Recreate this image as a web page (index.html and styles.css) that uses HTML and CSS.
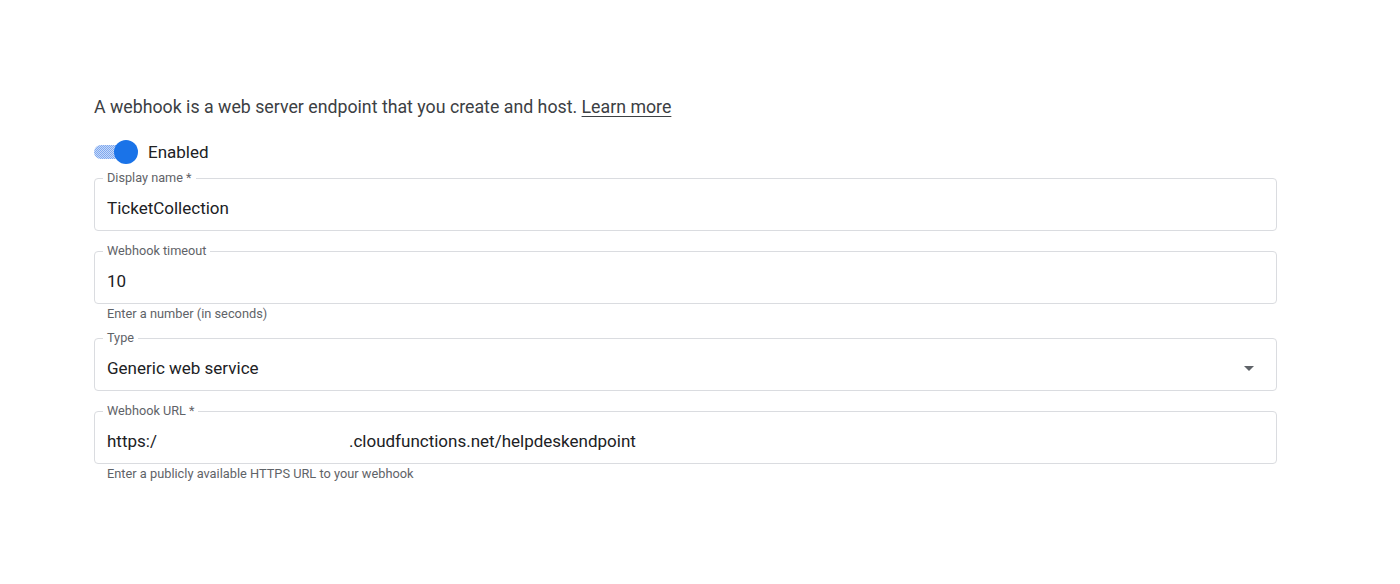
FILE: index.html
```html
<!DOCTYPE html>
<html lang="en">
<head>
<meta charset="utf-8">
<title>Webhook</title>
<link rel="stylesheet" href="styles.css">
</head>
<body>
<main class="page">
  <p class="intro">A webhook is a web server endpoint that you create and host. <a class="link" href="#">Learn more</a></p>
  <div class="toggle-row">
    <span class="toggle"><span class="track"></span><span class="thumb"></span></span>
    <span class="toggle-label">Enabled</span>
  </div>

  <div class="field">
    <fieldset class="box">
      <legend class="label">Display name *</legend>
      <div class="value">TicketCollection</div>
    </fieldset>
  </div>

  <div class="field">
    <fieldset class="box">
      <legend class="label">Webhook timeout</legend>
      <div class="value">10</div>
    </fieldset>
    <div class="hint">Enter a number (in seconds)</div>
  </div>

  <div class="field field-tight">
    <fieldset class="box">
      <legend class="label">Type</legend>
      <div class="value select">
        <span>Generic web service</span>
        <svg class="arrow" width="10" height="5" viewBox="0 0 10 5"><path d="M0 0 L10 0 L5 5 Z" fill="#5f6368"/></svg>
      </div>
    </fieldset>
  </div>

  <div class="field">
    <fieldset class="box">
      <legend class="label">Webhook URL *</legend>
      <div class="value"><span>https:/</span><span class="redact"></span><span>.cloudfunctions.net/helpdeskendpoint</span></div>
    </fieldset>
    <div class="hint">Enter a publicly available HTTPS URL to your webhook</div>
  </div>
</main>
</body>
</html>
```
FILE: styles.css
```css
html, body {
  margin: 0;
  padding: 0;
  background: #ffffff;
}
body {
  font-family: Roboto, "Liberation Sans", Arial, sans-serif;
  color: #202124;
}
.page {
  width: 1183px;
  padding: 96px 0 40px 94px;
  display: flex;
  flex-direction: column;
}
.intro {
  margin: 0;
  font-size: 17.75px;
  line-height: 22px;
  color: #3c4043;
}
.link {
  color: #3c4043;
  text-decoration: underline;
  text-underline-offset: 3px;
}
.toggle-row {
  display: flex;
  align-items: center;
  gap: 10px;
  margin-top: 21px;
  height: 26px;
}
.toggle {
  position: relative;
  width: 44px;
  height: 24px;
  display: inline-block;
}
.track {
  position: absolute;
  left: 0;
  top: 5px;
  width: 36px;
  height: 14px;
  border-radius: 7px;
  background: repeating-conic-gradient(#7fa8ee 0 25%, #c6d9fa 0 50%) 0 0 / 2px 2px;
}
.thumb {
  position: absolute;
  right: 0;
  top: 0;
  width: 24px;
  height: 24px;
  border-radius: 50%;
  background: #1a73e8;
}
.toggle-label {
  font-size: 17px;
  color: #202124;
}
.field {
  display: flex;
  flex-direction: column;
  margin-top: 6px;
}
.field + .field {
  margin-top: 13px;
}
.field + .field-tight {
  margin-top: 9px;
}
.box {
  margin: 0;
  padding: 0 8px 0 12px;
  border: 1px solid #dadce0;
  border-radius: 4px;
  min-width: 0;
}
.label {
  font-size: 12.7px;
  line-height: 14px;
  padding: 0 4px;
  margin-left: -4px;
  color: #5f6368;
}
.value {
  font-size: 17px;
  line-height: 24px;
  margin: 11px 0 10px 0;
  color: #202124;
  display: flex;
  align-items: center;
}
.select {
  justify-content: space-between;
  padding-right: 14px;
}
.redact {
  display: inline-block;
  width: 192px;
}
.hint {
  font-size: 12.8px;
  line-height: 16px;
  color: #5f6368;
  padding: 2px 0 0 13px;
}
```
